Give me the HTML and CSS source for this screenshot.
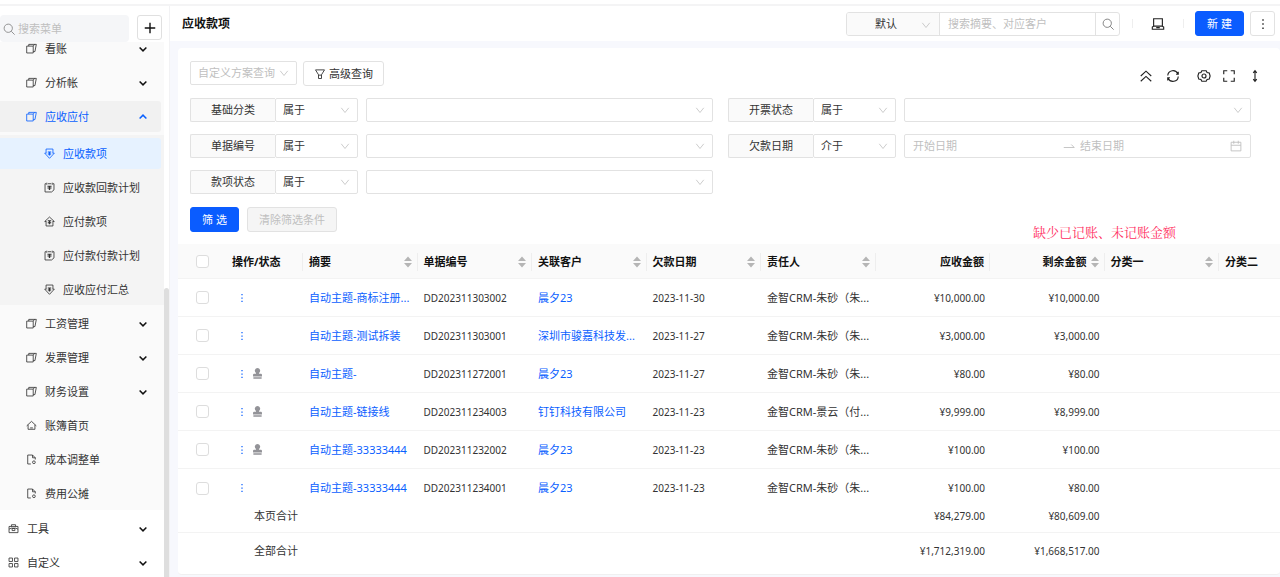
FILE: index.html
```html
<!doctype html>
<html lang="zh-CN">
<head>
    <meta charset="utf-8">
    <title>应收款项</title>
    <link rel="stylesheet" href="styles.css">
</head>
<body>
    <!-- icon sprite -->
    <svg class="sprite" aria-hidden="true">
        <symbol id="i-search" viewBox="0 0 16 16"><circle cx="7" cy="7" r="5.500"/><path d="M11 11l4.500 4.500"/></symbol>
        <symbol id="i-plus" viewBox="0 0 16 16"><path d="M8 2v12M2 8h12"/></symbol>
        <symbol id="i-down" viewBox="0 0 16 16"><path d="M2 4.500 8 12l6-7.500"/></symbol>
        <symbol id="i-arrow" viewBox="0 0 16 16"><path d="m3.500 6 4.500 4.500L12.500 6"/></symbol>
        <symbol id="i-layers" viewBox="0 0 16 16"><path d="M1 4.500h9.500v10H1zM4 4.500V2h11l-2 10.500h-2.500M12.500 2l-2 2.500"/></symbol>
        <symbol id="i-in" viewBox="0 0 16 16"><path d="M3 7.500v-6h10v6M3.500 7.500H1L8 15l7-7.500h-2.500"/><path class="dot" d="M5.500 5h5v1.500H9V8h1.500v1.500H9V11H7V9.500H5.500V8H7V6.500H5.500z"/></symbol>
        <symbol id="i-out" viewBox="0 0 16 16"><path d="M3 8v6.500h10V8M3.500 8H1l7-6.500L15 8h-2.500"/><path class="dot" d="M5.500 6h5v1.500H9V9h1.500v1.500H9V12H7v-1.500H5.500V9H7V7.500H5.500z"/></symbol>
        <symbol id="i-plan" viewBox="0 0 16 16"><path d="M3 2.500H1.500v12H11l3.500-3v-9H13M5.500 2.500h5M4 1v3M12 1v3"/><path class="dot" d="M5 5.500h6V7H9v1h2v1.500H9v2H7v-2H5V8h2V7H5z"/></symbol>
        <symbol id="i-home" viewBox="0 0 16 16"><path d="M1 8.500 8 2l7 6.500M3 7v6.500h10V7M6 11.500h4"/></symbol>
        <symbol id="i-file" viewBox="0 0 16 16"><path d="M7 14.500H2.500v-13h7l4 4V8M9.500 1.500v4h4"/><circle cx="11.500" cy="12" r="2"/></symbol>
        <symbol id="i-tool" viewBox="0 0 16 16"><path d="M1.500 5h13v9h-13zM5 5V2.500h6V5M1.500 9l3-1.500h7l3 1.500M6 8h4v3H6z"/></symbol>
        <symbol id="i-grid" viewBox="0 0 16 16"><path d="M1.500 1.500h5v5h-5zM9.500 1.500h5v5h-5zM1.500 9.500h5v5h-5zM9.500 9.500h5v5h-5z"/></symbol>
        <symbol id="i-filter" viewBox="0 0 16 16"><path d="M2 2.500h12L10 9v5H6V9zM6 9.500h4"/></symbol>
        <symbol id="i-laptop" viewBox="0 0 16 16"><path d="M3 2h10v8.500H3zM3 10.500l-1.500 1V14h13v-2.500l-1.500-1M6 12.200h4"/></symbol>
        <symbol id="i-more" viewBox="0 0 16 16"><path class="dot" d="M7 1.500h2v2H7zM7 7h2v2H7zM7 12.500h2v2H7z"/></symbol>
        <symbol id="i-up2" viewBox="0 0 16 16"><path d="m2 8 6-5.500L14 8M2 14l6-5.500 6 5.500"/></symbol>
        <symbol id="i-reload" viewBox="0 0 16 16"><path d="M2 7.500A6 6 0 0 1 13.500 5.500M14 8.500A6 6 0 0 1 2.500 10.500M14 3v3h-2.500M2 13v-3h2.500"/></symbol>
        <symbol id="i-gear" viewBox="0 0 16 16"><path d="M5.500 2h5l1 2 2.500.500L15 8l-1 3.500-2.500.500-1 2h-5l-1-2L2 11.500 1 8l1-3.500L4.500 4z"/><circle cx="8" cy="8" r="2.300"/></symbol>
        <symbol id="i-full" viewBox="0 0 16 16"><path d="M6 2H2v4M10 2h4v4M2 10v4h4M14 10v4h-4"/></symbol>
        <symbol id="i-height" viewBox="0 0 16 16"><path d="M8 2.500v11M6 4.500l2-2.500 2 2.500M6 11.500l2 2.500 2-2.500"/></symbol>
        <symbol id="i-to" viewBox="0 0 16 16"><path d="M1 10h14l-4-4"/></symbol>
        <symbol id="i-date" viewBox="0 0 16 16"><path d="M1.500 3h13v11.500h-13zM1.500 7h13M5 1v4M11 1v4"/></symbol>
        <symbol id="i-stamp" viewBox="0 0 16 16"><path class="dot" d="M8 0a4 4 0 0 0-2.500 7L6 8.500H3A1.500 1.500 0 0 0 1.500 10v2.500h13V10A1.500 1.500 0 0 0 13 8.500h-3L10.500 7A4 4 0 0 0 8 0zM2 13.500h12v2H2z"/></symbol>
        <symbol id="i-sort" viewBox="0 0 8 12"><path class="dot" d="M0 5l4-4.500L8 5zM0 7l4 4.500L8 7z"/></symbol>
    </svg>

    <div class="app">
        <aside class="sidebar">
            <div class="side-head">
                <label class="side-search">
                    <svg class="icon"><use href="#i-search"/></svg>
                    <input type="text" placeholder="搜索菜单" aria-label="搜索菜单">
                </label>
                <button class="add-btn" aria-label="添加"><svg class="icon"><use href="#i-plus"/></svg></button>
            </div>
            <nav class="menu-scroll">
                <div class="menu">
                    <div class="group">
                        <a href="#" class="item"><svg class="icon"><use href="#i-layers"/></svg>看账<svg class="icon arrow"><use href="#i-arrow"/></svg></a>
                        <a href="#" class="item"><svg class="icon"><use href="#i-layers"/></svg>分析帐<svg class="icon arrow"><use href="#i-arrow"/></svg></a>
                        <a href="#" class="item open"><svg class="icon"><use href="#i-layers"/></svg>应收应付<svg class="icon arrow"><use href="#i-arrow"/></svg></a>
                        <div class="submenu">
                            <a href="#" class="item active"><svg class="icon"><use href="#i-in"/></svg>应收款项</a>
                            <a href="#" class="item"><svg class="icon"><use href="#i-plan"/></svg>应收款回款计划</a>
                            <a href="#" class="item"><svg class="icon"><use href="#i-out"/></svg>应付款项</a>
                            <a href="#" class="item"><svg class="icon"><use href="#i-plan"/></svg>应付款付款计划</a>
                            <a href="#" class="item"><svg class="icon"><use href="#i-in"/></svg>应收应付汇总</a>
                        </div>
                        <a href="#" class="item"><svg class="icon"><use href="#i-layers"/></svg>工资管理<svg class="icon arrow"><use href="#i-arrow"/></svg></a>
                        <a href="#" class="item"><svg class="icon"><use href="#i-layers"/></svg>发票管理<svg class="icon arrow"><use href="#i-arrow"/></svg></a>
                        <a href="#" class="item"><svg class="icon"><use href="#i-layers"/></svg>财务设置<svg class="icon arrow"><use href="#i-arrow"/></svg></a>
                        <a href="#" class="item"><svg class="icon"><use href="#i-home"/></svg>账簿首页</a>
                        <a href="#" class="item"><svg class="icon"><use href="#i-file"/></svg>成本调整单</a>
                        <a href="#" class="item"><svg class="icon"><use href="#i-file"/></svg>费用公摊</a>
                    </div>
                    <a href="#" class="item top"><svg class="icon"><use href="#i-tool"/></svg>工具<svg class="icon arrow"><use href="#i-arrow"/></svg></a>
                    <a href="#" class="item top"><svg class="icon"><use href="#i-grid"/></svg>自定义<svg class="icon arrow"><use href="#i-arrow"/></svg></a>
                </div>
                <span class="scroll-thumb"></span>
            </nav>
        </aside>

        <main class="main">
            <header class="topbar">
                <h1>应收款项</h1>
                <div class="search-group">
                    <span class="select scope">
                        <select aria-label="搜索范围"><option>默认</option></select>
                        <svg class="icon"><use href="#i-down"/></svg>
                    </span>
                    <input type="text" placeholder="搜索摘要、对应客户" aria-label="搜索">
                    <button aria-label="搜索"><svg class="icon"><use href="#i-search"/></svg></button>
                </div>
                <span class="divider"></span>
                <button class="plain" aria-label="桌面"><svg class="icon"><use href="#i-laptop"/></svg></button>
                <span class="divider"></span>
                <button class="btn primary">新 建</button>
                <button class="btn more" aria-label="更多"><svg class="icon"><use href="#i-more"/></svg></button>
            </header>

            <section class="card">
                <div class="filters">
                    <div class="tools">
                        <span class="select plan">
                            <select aria-label="查询方案"><option>自定义方案查询</option></select>
                            <svg class="icon"><use href="#i-down"/></svg>
                        </span>
                        <button class="btn advanced"><svg class="icon"><use href="#i-filter"/></svg>高级查询</button>
                        <div class="tool-icons">
                            <button class="plain" aria-label="收起"><svg class="icon"><use href="#i-up2"/></svg></button>
                            <button class="plain" aria-label="刷新"><svg class="icon"><use href="#i-reload"/></svg></button>
                            <button class="plain wide" aria-label="设置"><svg class="icon"><use href="#i-gear"/></svg></button>
                            <button class="plain" aria-label="全屏"><svg class="icon"><use href="#i-full"/></svg></button>
                            <button class="plain" aria-label="密度"><svg class="icon"><use href="#i-height"/></svg></button>
                        </div>
                    </div>

                    <div class="fields">
                        <div class="field">
                            <label for="category">基础分类</label>
                            <span class="select op"><select aria-label="条件"><option>属于</option></select><svg class="icon"><use href="#i-down"/></svg></span>
                            <span class="select value"><select id="category"><option></option></select><svg class="icon"><use href="#i-down"/></svg></span>
                        </div>
                        <div class="field">
                            <label for="invoice">开票状态</label>
                            <span class="select op"><select aria-label="条件"><option>属于</option></select><svg class="icon"><use href="#i-down"/></svg></span>
                            <span class="select value"><select id="invoice"><option></option></select><svg class="icon"><use href="#i-down"/></svg></span>
                        </div>
                        <div class="field">
                            <label for="number">单据编号</label>
                            <span class="select op"><select aria-label="条件"><option>属于</option></select><svg class="icon"><use href="#i-down"/></svg></span>
                            <span class="select value"><select id="number"><option></option></select><svg class="icon"><use href="#i-down"/></svg></span>
                        </div>
                        <div class="field">
                            <label for="dateFrom">欠款日期</label>
                            <span class="select op"><select aria-label="条件"><option>介于</option></select><svg class="icon"><use href="#i-down"/></svg></span>
                            <span class="range">
                                <input type="text" id="dateFrom" placeholder="开始日期">
                                <svg class="icon"><use href="#i-to"/></svg>
                                <input type="text" placeholder="结束日期" aria-label="结束日期">
                                <svg class="icon"><use href="#i-date"/></svg>
                            </span>
                        </div>
                        <div class="field">
                            <label for="status">款项状态</label>
                            <span class="select op"><select aria-label="条件"><option>属于</option></select><svg class="icon"><use href="#i-down"/></svg></span>
                            <span class="select value"><select id="status"><option></option></select><svg class="icon"><use href="#i-down"/></svg></span>
                        </div>
                    </div>

                    <div class="actions">
                        <button class="btn primary">筛 选</button>
                        <button class="btn" disabled>清除筛选条件</button>
                    </div>
                    <p class="note">缺少已记账、未记账金额</p>
                </div>

                <table>
                    <colgroup>
                        <col class="c-check"><col class="c-action"><col span="8"><col class="c-last">
                    </colgroup>
                    <thead>
                        <tr>
                            <th class="check"><input type="checkbox" aria-label="全选"></th>
                            <th><div>操作/状态</div></th>
                            <th><div>摘要<svg class="sort"><use href="#i-sort"/></svg></div></th>
                            <th><div>单据编号<svg class="sort"><use href="#i-sort"/></svg></div></th>
                            <th><div>关联客户<svg class="sort"><use href="#i-sort"/></svg></div></th>
                            <th><div>欠款日期<svg class="sort"><use href="#i-sort"/></svg></div></th>
                            <th><div>责任人<svg class="sort"><use href="#i-sort"/></svg></div></th>
                            <th class="amount"><div>应收金额</div></th>
                            <th class="amount sortable"><div>剩余金额<svg class="sort"><use href="#i-sort"/></svg></div></th>
                            <th><div>分类一<svg class="sort"><use href="#i-sort"/></svg></div></th>
                            <th><div>分类二</div></th>
                        </tr>
                    </thead>
                    <tbody>
                        <tr>
                            <td class="check"><input type="checkbox" aria-label="选择"></td>
                            <td class="ops"><svg class="icon dots"><use href="#i-more"/></svg></td>
                            <td><a href="#">自动主题-商标注册...</a></td>
                            <td class="num">DD202311303002</td>
                            <td><a href="#">晨夕23</a></td>
                            <td class="num">2023-11-30</td>
                            <td>金智CRM-朱砂（朱...</td>
                            <td class="num amount">¥10,000.00</td>
                            <td class="num amount">¥10,000.00</td>
                            <td></td><td></td>
                        </tr>
                        <tr>
                            <td class="check"><input type="checkbox" aria-label="选择"></td>
                            <td class="ops"><svg class="icon dots"><use href="#i-more"/></svg></td>
                            <td><a href="#">自动主题-测试拆装</a></td>
                            <td class="num">DD202311303001</td>
                            <td><a href="#">深圳市骏嘉科技发...</a></td>
                            <td class="num">2023-11-27</td>
                            <td>金智CRM-朱砂（朱...</td>
                            <td class="num amount">¥3,000.00</td>
                            <td class="num amount">¥3,000.00</td>
                            <td></td><td></td>
                        </tr>
                        <tr>
                            <td class="check"><input type="checkbox" aria-label="选择"></td>
                            <td class="ops"><svg class="icon dots"><use href="#i-more"/></svg><svg class="icon stamp"><use href="#i-stamp"/></svg></td>
                            <td><a href="#">自动主题-</a></td>
                            <td class="num">DD202311272001</td>
                            <td><a href="#">晨夕23</a></td>
                            <td class="num">2023-11-27</td>
                            <td>金智CRM-朱砂（朱...</td>
                            <td class="num amount">¥80.00</td>
                            <td class="num amount">¥80.00</td>
                            <td></td><td></td>
                        </tr>
                        <tr>
                            <td class="check"><input type="checkbox" aria-label="选择"></td>
                            <td class="ops"><svg class="icon dots"><use href="#i-more"/></svg><svg class="icon stamp"><use href="#i-stamp"/></svg></td>
                            <td><a href="#">自动主题-链接线</a></td>
                            <td class="num">DD202311234003</td>
                            <td><a href="#">钉钉科技有限公司</a></td>
                            <td class="num">2023-11-23</td>
                            <td>金智CRM-景云（付...</td>
                            <td class="num amount">¥9,999.00</td>
                            <td class="num amount">¥8,999.00</td>
                            <td></td><td></td>
                        </tr>
                        <tr>
                            <td class="check"><input type="checkbox" aria-label="选择"></td>
                            <td class="ops"><svg class="icon dots"><use href="#i-more"/></svg><svg class="icon stamp"><use href="#i-stamp"/></svg></td>
                            <td><a href="#">自动主题-33333444</a></td>
                            <td class="num">DD202311232002</td>
                            <td><a href="#">晨夕23</a></td>
                            <td class="num">2023-11-23</td>
                            <td>金智CRM-朱砂（朱...</td>
                            <td class="num amount">¥100.00</td>
                            <td class="num amount">¥100.00</td>
                            <td></td><td></td>
                        </tr>
                        <tr>
                            <td class="check"><input type="checkbox" aria-label="选择"></td>
                            <td class="ops"><svg class="icon dots"><use href="#i-more"/></svg></td>
                            <td><a href="#">自动主题-33333444</a></td>
                            <td class="num">DD202311234001</td>
                            <td><a href="#">晨夕23</a></td>
                            <td class="num">2023-11-23</td>
                            <td>金智CRM-朱砂（朱...</td>
                            <td class="num amount">¥100.00</td>
                            <td class="num amount">¥80.00</td>
                            <td></td><td></td>
                        </tr>
                    </tbody>
                    <tfoot>
                        <tr>
                            <td></td>
                            <td class="total">本页合计</td>
                            <td colspan="5"></td>
                            <td class="num amount">¥84,279.00</td>
                            <td class="num amount">¥80,609.00</td>
                            <td></td><td></td>
                        </tr>
                        <tr>
                            <td></td>
                            <td class="total">全部合计</td>
                            <td colspan="5"></td>
                            <td class="num amount">¥1,712,319.00</td>
                            <td class="num amount">¥1,668,517.00</td>
                            <td></td><td></td>
                        </tr>
                    </tfoot>
                </table>
            </section>
        </main>
    </div>
</body>
</html>
```

FILE: styles.css
```css
* {
    box-sizing: border-box;
}

body {
    margin: 0;
    font-family: "Noto Sans", "Noto Sans CJK SC", sans-serif;
    font-size: 11px;
    line-height: 16px;
    color: #333;
    background: #fff;
}

a {
    color: #0a60ff;
    text-decoration: none;
}

button,
input,
select {
    margin: 0;
    font: inherit;
    color: inherit;
}

button {
    padding: 0;
    cursor: pointer;
}

input::placeholder {
    color: #bfbfbf;
    opacity: 1;
}

.sprite {
    position: absolute;
    width: 0;
    height: 0;
}

.icon {
    display: block;
    flex: none;
    width: 12px;
    height: 12px;
    fill: none;
    stroke: currentColor;
    stroke-width: 1.2;
}

.dot {
    fill: currentColor;
    stroke: none;
}

.app {
    display: flex;
    height: 100vh;
    border-top: 2px solid #f4f4f5;
    margin-top: 4px;
    overflow: hidden;
}

/* Sidebar */
.sidebar {
    display: flex;
    flex-direction: column;
    flex: none;
    width: 170px;
    border-right: 1px solid #f2f2f4;
}

.side-head {
    display: flex;
    justify-content: space-between;
    flex: none;
    height: 36px;
    padding: 9px 7px 0 0;
}

.side-search {
    display: flex;
    align-items: center;
    gap: 3px;
    width: 129px;
    padding-left: 3px;
    background: #f5f6f8;
    border-radius: 4px;
    color: #888;
}

.side-search input {
    width: 100px;
    padding: 0;
    border: none;
    background: none;
}

.add-btn {
    display: flex;
    align-items: center;
    justify-content: center;
    width: 25px;
    height: 25px;
    background: #fff;
    border: 1px solid #e0e0e0;
    border-radius: 3px;
    color: #111;
}

.add-btn .icon {
    width: 14px;
    height: 14px;
    stroke-width: 1.6;
}

.menu-scroll {
    position: relative;
    flex: 1;
    min-height: 0;
    overflow: hidden;
}

/* the list is scrolled a little way down */
.menu {
    margin: -9px 5px 0 0;
}

.group {
    display: flex;
    flex-direction: column;
    gap: 3px;
    padding-bottom: 1px;
    margin-bottom: 3px;
    background: #fafafa;
}

.item {
    display: flex;
    align-items: center;
    gap: 8px;
    height: 31px;
    margin-right: 3px;
    padding: 0 12px 0 26px;
    border-radius: 0 3px 3px 0;
    color: #333;
}

.item .icon {
    width: 11px;
    height: 11px;
}

.item .arrow {
    width: 12px;
    height: 12px;
    margin-left: auto;
    stroke: #111;
    stroke-width: 2;
}

.item.open {
    background: #f1f1f1;
    color: #0a60ff;
}

.item.open .arrow {
    stroke: #0a60ff;
    transform: rotate(180deg);
}

.item.top {
    margin-bottom: 3px;
    padding-left: 8px;
}

.submenu {
    display: flex;
    flex-direction: column;
    gap: 3px;
    padding-top: 3px;
    background: #f4f4f4;
}

.submenu .item {
    padding-left: 44px;
}

.submenu .active {
    background: #e6f2ff;
    color: #0a60ff;
}

.scroll-thumb {
    position: absolute;
    top: 246px;
    right: 0;
    bottom: 0;
    width: 5px;
    background: #dedede;
    border-radius: 3px 3px 0 0;
}

/* Main column */
.main {
    display: flex;
    flex-direction: column;
    flex: 1;
    min-width: 0;
    background: #f7f8fd;
}

.topbar {
    display: flex;
    align-items: center;
    flex: none;
    height: 35px;
    padding: 0 5px 0 12px;
    background: #fff;
}

.topbar h1 {
    margin: 0 auto 0 0;
    font-size: 12px;
    color: #111;
}

.search-group {
    display: flex;
    width: 274px;
    height: 24px;
    margin-right: 12px;
    border: 1px solid #e2e2e2;
    border-radius: 3px;
}

.search-group input {
    flex: 1;
    min-width: 0;
    padding: 0 8px;
    border: none;
    border-left: 1px solid #e2e2e2;
}

.search-group button {
    display: flex;
    align-items: center;
    justify-content: center;
    width: 24px;
    background: none;
    border: none;
    border-left: 1px solid #e2e2e2;
    color: #777;
}

.divider {
    width: 1px;
    height: 9px;
    background: #eee;
}

.plain {
    display: flex;
    background: none;
    border: none;
    color: #222;
}

.plain .icon {
    width: 14px;
    height: 14px;
    stroke-width: 1.3;
}

.topbar .plain {
    margin: 0 18px;
}

.topbar .primary {
    margin: 0 6px 0 11px;
}

.btn {
    display: flex;
    align-items: center;
    justify-content: center;
    gap: 3px;
    height: 25px;
    padding: 0 11px;
    background: #fff;
    border: 1px solid #e2e2e2;
    border-radius: 3px;
}

.btn:disabled {
    background: #f5f5f5;
    color: #bfbfbf;
}

.btn.primary {
    width: 49px;
    padding: 0;
    background: #0a5cff;
    border-color: #0a5cff;
    color: #fff;
}

.btn.more {
    width: 25px;
    padding: 0;
}

.btn.advanced {
    padding: 0 10px;
}

/* Select boxes */
.select {
    position: relative;
    display: flex;
    height: 24px;
}

.select select {
    appearance: none;
    width: 100%;
    padding: 0 20px 0 7px;
    background: #fff;
    border: 1px solid #e2e2e2;
    border-radius: 2px;
}

.select .icon {
    position: absolute;
    top: 7px;
    right: 8px;
    width: 10px;
    height: 10px;
    color: #bbb;
    pointer-events: none;
}

.select.scope {
    width: 92px;
    height: 22px;
}

.scope select {
    padding: 0 24px 0 28px;
    background: #fafafa;
    border: none;
}

.select.plan {
    width: 107px;
    color: #bfbfbf;
}

/* Filter form */
.card {
    position: relative;
    margin: 7px 0 0 8px;
    background: #fff;
    border-bottom: 1px solid #f0f0f0;
    border-radius: 4px;
    padding-bottom: 5px;
}

.filters {
    position: relative;
    padding: 13px 29px 12px 12px;
}

.tools {
    display: flex;
    gap: 6px;
    margin-bottom: 12px;
}

.tool-icons {
    display: flex;
    align-items: center;
    gap: 12px;
    margin: 5px -11px 0 auto;
}

.tool-icons .plain:first-child {
    margin-right: 1px;
}

.tool-icons .wide {
    margin-left: 5px;
    margin-right: -1px;
}

.fields {
    display: grid;
    grid-template-columns: repeat(2, minmax(0, 1fr));
    gap: 12px 15px;
    margin-bottom: 13px;
}

.field {
    display: flex;
    height: 24px;
}

.field label {
    flex: none;
    width: 85px;
    line-height: 22px;
    text-align: center;
    background: #fafafa;
    border: 1px solid #e2e2e2;
    border-right: none;
    border-radius: 2px 0 0 2px;
}

.select.op {
    flex: none;
    width: 83px;
    margin-right: 8px;
}

.select.value,
.range {
    flex: 1;
}

.range {
    display: flex;
    align-items: center;
    min-width: 0;
    padding: 0 8px;
    border: 1px solid #e2e2e2;
    border-radius: 2px;
    color: #bfbfbf;
}

.range input {
    flex: 1;
    min-width: 0;
    padding: 0;
    border: none;
}

.range input + .icon {
    margin: 0 5px 0 0;
}

.range .icon:last-child {
    margin: 0;
}

.actions {
    display: flex;
    gap: 8px;
}

.note {
    position: absolute;
    right: 104px;
    bottom: 2px;
    margin: 0;
    font-family: "Noto Serif CJK SC", "Noto Sans CJK SC", serif;
    font-size: 13px;
    line-height: 20px;
    color: #ff2d60;
}

/* Table */
table {
    width: 100%;
    table-layout: fixed;
    border-collapse: separate;
    border-spacing: 0;
}

.c-check {
    width: 48px;
}

.c-action {
    width: 77px;
}

.c-last {
    width: 61px;
}

th,
td {
    height: 38px;
    padding: 0 5px 0 6px;
    text-align: left;
    white-space: nowrap;
    border-bottom: 1px solid #f3f3f3;
}

th {
    height: 35px;
    padding: 1px 0 0;
    background: #fafafa;
    color: #111;
}

th div {
    display: flex;
    align-items: center;
    justify-content: space-between;
    height: 18px;
    padding: 0 5px 0 6px;
    border-right: 1px solid #eee;
}

th:last-child div {
    border-right: none;
}

.sort {
    flex: none;
    width: 8px;
    height: 12px;
    color: #b5b5b5;
}

.check {
    padding: 0;
    text-align: center;
}

.check input {
    appearance: none;
    display: block;
    width: 13px;
    height: 13px;
    margin: 0 auto;
    background: #fff;
    border: 1px solid #ddd;
    border-radius: 3px;
}

.ops {
    line-height: 14px;
}

.ops .icon {
    display: inline-block;
    vertical-align: -1px;
}

.ops .dots {
    width: 10px;
    height: 10px;
    margin: 0 5px;
    color: #0a60ff;
}

.ops .stamp {
    width: 11px;
    height: 11px;
    color: #939398;
}

.num {
    font-size: 10px;
}

.amount {
    text-align: right;
}

th.amount div {
    justify-content: flex-end;
}

th.sortable div {
    gap: 4px;
}

tbody tr:last-child td {
    height: 30px;
    padding-top: 8px;
    border-bottom: none;
}

tfoot td {
    height: 34px;
}

tfoot tr:last-child td {
    height: 36px;
    border-bottom: none;
}

td.total {
    padding-left: 28px;
}
```
